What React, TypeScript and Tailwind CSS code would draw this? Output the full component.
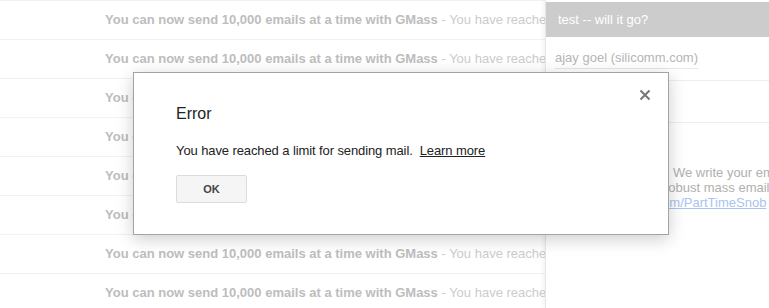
const rows = Array.from({ length: 8 });

function Row() {
  return (
    <div className="flex h-[39px] items-center overflow-hidden whitespace-nowrap border-b border-[#f2f2f2] pl-[105px] text-[13px]">
      <span className="font-bold text-[#bdbdbd]">You can now send 10,000 emails at a time with GMass</span>
      <span className="text-[#cccccc]">&nbsp;- You have reached a limit for sending mail</span>
    </div>
  );
}

function CloseIcon() {
  return (
    <svg width="12" height="12" viewBox="0 0 12 12" className="text-[#777]">
      <path d="M1.5 1.5 L10.5 10.5 M10.5 1.5 L1.5 10.5" stroke="currentColor" strokeWidth="2" />
    </svg>
  );
}

export default function App() {
  return (
    <div className="relative h-[308px] w-[769px] overflow-hidden bg-white font-['Liberation_Sans',Arial,sans-serif]">
      <div className="flex h-full">
        <div className="w-[545px] shrink-0 border-t border-[#f2f2f2]">
          {rows.map((_, i) => (
            <Row key={i} />
          ))}
        </div>

        <div className="flex-1 overflow-hidden border-l border-[#e6e6e6] shadow-[-2px_0_4px_rgba(0,0,0,0.05)]">
          <div className="mt-[2px] flex h-[35px] items-center bg-[#cccccc] pl-[12px] text-[13px] whitespace-nowrap text-white">
            test -- will it go?
          </div>
          <div className="flex h-[44px] items-center border-b border-[#eeeeee] pl-[9px]">
            <span className="border-b border-[#e8e8e8] pb-[1px] text-[13px] whitespace-nowrap text-[#b5b5b5]">
              ajay goel (silicomm.com)
            </span>
          </div>
          <div className="h-[42px] border-b border-[#eeeeee]" />
          <div className="pt-[42px] pl-[13px] text-[13px] leading-[15px] whitespace-nowrap text-[#b0b0b0]">
            <div>
              <span className="inline-block w-[106px]">GMass</span>- We write your emails for you
            </div>
            <div>
              <span className="inline-block w-[105px]">Send</span>robust mass email campaigns
            </div>
            <div>
              <span className="inline-block w-[93px]">www</span>
              <span className="text-[#a8c4f0] underline">.com/PartTimeSnob</span>
            </div>
          </div>
        </div>
      </div>

      <div className="absolute left-[133px] top-[72px] h-[163px] w-[536px] border border-[#a3a3a3] bg-white shadow-[0_4px_16px_rgba(0,0,0,0.2)]">
        <div className="absolute right-[17px] top-[16px]">
          <CloseIcon />
        </div>
        <div className="pl-[42px] pt-[31px]">
          <div className="text-[16px] leading-[20px] text-[#222]">Error</div>
          <div className="mt-[19px] text-[13px] leading-[16px] tracking-[-0.1px] text-[#222]">
            You have reached a limit for sending mail.&nbsp;&nbsp;<span className="underline">Learn more</span>
          </div>
          <button className="mt-[16px] h-[28px] w-[71px] rounded-[2px] border border-[#dcdcdc] bg-[#f5f5f5] text-[11px] font-bold text-[#444]">
            OK
          </button>
        </div>
      </div>
    </div>
  );
}
